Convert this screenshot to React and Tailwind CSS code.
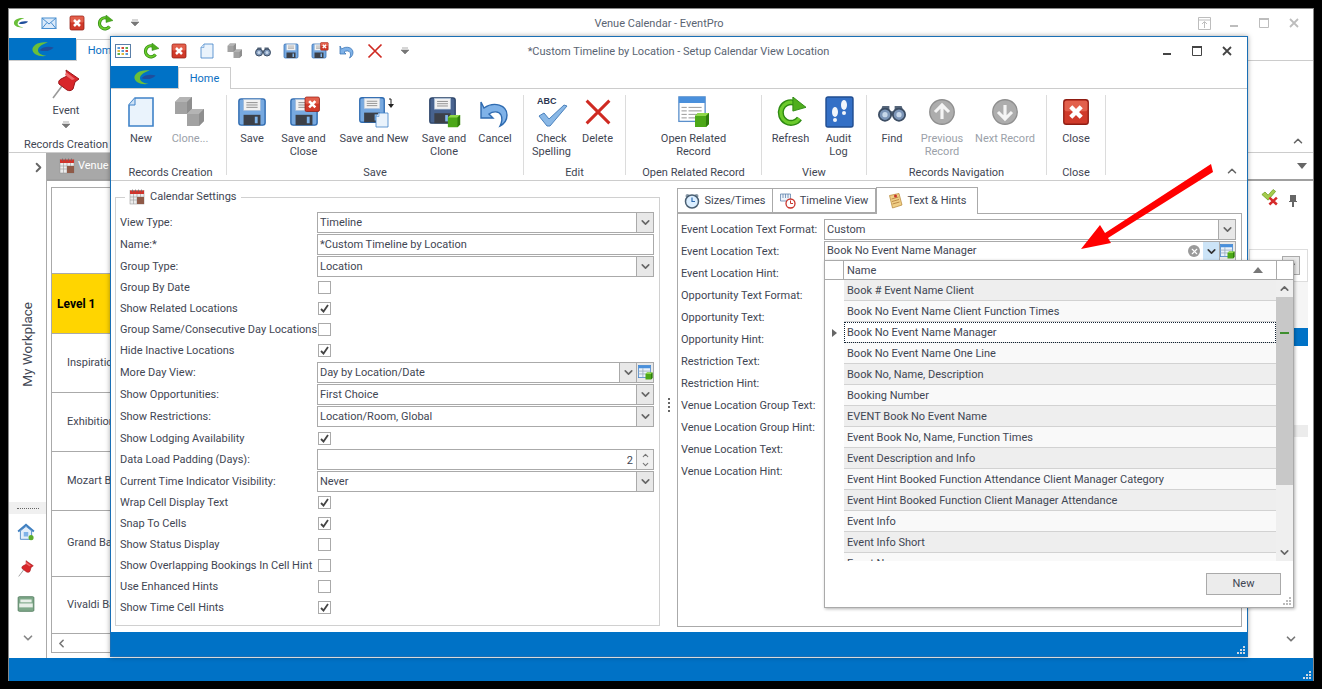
import React from 'react';
import { ChevronDown, ChevronUp, ChevronLeft, ChevronRight, X } from 'lucide-react';

const Svg = ({ s = 32, children, vb = '0 0 32 32' }) => (
  <svg width={s} height={s} viewBox={vb} className="block shrink-0">{children}</svg>
);

const Logo = ({ w = 24, h = 17 }) => (
  <svg width={w} height={h} viewBox="0 0 34 24" className="block shrink-0">
    <path d="M24 2C11 0 2 6 2 12c0 6 9 11 20 9-9-1-13-5-12-9 1-5 7-8 14-10Z" fill="#6abf3a" />
    <path d="M12 13c4-5 13-6 20-4-3 4-11 7-20 4Z" fill="#1f4e9c" />
  </svg>
);

const Mail = ({ s = 16 }) => (
  <Svg s={s}>
    <rect x="2" y="6" width="28" height="21" fill="#dbeafa" stroke="#4a8fd0" strokeWidth="2" />
    <path d="M2 6l14 12L30 6M2 27l10-12M30 27L20 15" fill="none" stroke="#4a8fd0" strokeWidth="2" />
  </Svg>
);

const RedBox = ({ s = 32 }) => (
  <Svg s={s}>
    <rect x="2" y="2" width="28" height="28" rx="3" fill="#d03a2a" stroke="#8f1c12" strokeWidth="1.5" />
    <rect x="3" y="3" width="26" height="12" rx="2" fill="#e2604c" />
    <path d="M10 10l12 12M22 10L10 22" stroke="#fff" strokeWidth="5" />
  </Svg>
);

const Refresh = ({ s = 32 }) => (
  <Svg s={s}>
    <path d="M25 23A11 11 0 1 1 19 6" fill="none" stroke="#2e8a12" strokeWidth="6.5" />
    <path d="M25 23A11 11 0 1 1 19 6" fill="none" stroke="#6ccb2c" strokeWidth="3.5" />
    <path d="M18 0l14 11-14 4Z" fill="#4fae1e" stroke="#2e8a12" strokeWidth="1" />
  </Svg>
);

const Page = ({ s = 32 }) => (
  <Svg s={s}>
    <path d="M10 2h18v28H4V9Z" fill="#eaf3fc" stroke="#3f82c8" strokeWidth="1.6" />
    <path d="M10 2v7H4" fill="#cfe2f6" stroke="#3f82c8" strokeWidth="1" />
  </Svg>
);

const Cube = ({ x, y, top = '#b4b4b4', side = '#8e8e8e', front = '#a2a2a2' }) => (
  <g transform={`translate(${x} ${y})`}>
    <path d="M0 5l5-5h12v12l-5 5H0Z" fill={front} />
    <path d="M0 5l5-5h12l-5 5Z" fill={top} />
    <path d="M12 5l5-5v12l-5 5Z" fill={side} />
  </g>
);

const Clone = ({ s = 32 }) => (
  <Svg s={s}>
    <Cube x={1} y={1} />
    <Cube x={13} y={13} />
  </Svg>
);

const Binoculars = ({ s = 32 }) => (
  <Svg s={s}>
    <path d="M5 9h8v6h6V9h8l4 11H1Z" fill="#56667a" />
    <circle cx="8" cy="19" r="7" fill="#7d96b8" stroke="#3c4d63" strokeWidth="2" />
    <circle cx="24" cy="19" r="7" fill="#7d96b8" stroke="#3c4d63" strokeWidth="2" />
    <circle cx="8" cy="19" r="3" fill="#c8d8ea" />
    <circle cx="24" cy="19" r="3" fill="#c8d8ea" />
  </Svg>
);

const Floppy = ({ s = 30, dark = false }) => (
  <Svg s={s}>
    <rect x="2" y="2" width="28" height="28" rx="2.5" fill={dark ? '#48638f' : '#77a9e0'} stroke={dark ? '#2c4468' : '#2f6bb0'} strokeWidth="1.5" />
    <rect x="7" y="2.5" width="18" height="12" fill="#f2f2f2" stroke="#9db6d4" strokeWidth="0.6" />
    <path d="M10 6h12M10 8.5h12M10 11h12" stroke="#8a8a8a" strokeWidth="1" />
    <rect x="7" y="19" width="18" height="11" fill="#3c4048" />
    <rect x="19" y="21" width="3" height="7" fill="#7fb4ea" />
  </Svg>
);

const Stack = ({ s = 32, children }) => (
  <div className="relative shrink-0" style={{ width: s, height: s }}>{children}</div>
);

const FloppyClose = ({ s = 30 }) => (
  <Stack s={s}>
    <Floppy s={s} />
    <div className="absolute right-[-2px] top-[-1px]"><RedBox s={s * 0.55} /></div>
  </Stack>
);

const FloppyNew = () => (
  <Stack s={32}>
    <Floppy s={28} />
    <div className="absolute right-[0px] bottom-[0px]"><Page s={16} /></div>
    <svg width="6" height="12" viewBox="0 0 6 12" className="absolute right-[-4px] top-[2px]">
      <path d="M1 1h2v6" fill="none" stroke="#222" strokeWidth="1" />
      <path d="M0 6h6l-3 4Z" fill="#222" />
    </svg>
  </Stack>
);

const GreenCube = ({ s = 16 }) => (
  <svg width={s} height={s} viewBox="0 0 16 16" className="block">
    <path d="M1 4l3-3h11v11l-3 3H1Z" fill="#4ca818" />
    <path d="M1 4l3-3h11l-3 3Z" fill="#8fd84a" />
    <path d="M12 4l3-3v11l-3 3Z" fill="#2f7d0c" />
  </svg>
);

const FloppyClone = () => (
  <Stack s={32}>
    <Floppy s={29} dark />
    <div className="absolute right-[-1px] bottom-[0px]"><GreenCube s={14} /></div>
  </Stack>
);

const Undo = ({ s = 32 }) => (
  <Svg s={s}>
    <path d="M5 12c10-7 23-3 23 7 0 5-3 9-7 11 2-4 3-7 1-11-2-4-8-4-12-1l4 4H2V6Z" fill="#7fb2e8" stroke="#2f6bb0" strokeWidth="1.4" />
  </Svg>
);

const RedCross = ({ s = 32 }) => (
  <Svg s={s}>
    <path d="M3 3l26 26M29 3L3 29" stroke="#cf2a22" strokeWidth="3.4" />
  </Svg>
);

const Spell = () => (
  <svg width="32" height="32" viewBox="0 0 32 32" className="block shrink-0">
    <text x="1" y="8" fontSize="9" fontWeight="700" fontFamily="Liberation Sans" fill="#2b3550">ABC</text>
    <path d="M3 20l5-3 5 6L28 9l3 1-17 20h-3Z" fill="#8ab8e6" stroke="#4c82bd" strokeWidth="1" />
  </svg>
);

const RelatedRecord = () => (
  <Stack s={32}>
    <Svg s={28}>
      <rect x="1" y="1" width="30" height="28" fill="#fff" stroke="#5a8fcb" strokeWidth="1.5" />
      <rect x="1" y="1" width="30" height="7" fill="#4a90dc" />
      <path d="M4 13h6M12 13h15M4 17h6M12 17h15M4 21h6M12 21h15M4 25h6M12 25h15" stroke="#8a8a8a" strokeWidth="1" />
    </Svg>
    <div className="absolute right-[0px] bottom-[0px]"><GreenCube s={16} /></div>
  </Stack>
);

const Audit = () => (
  <Svg>
    <rect x="3" y="1" width="27" height="30" rx="2" fill="#3470c6" stroke="#1f4c90" strokeWidth="1.4" />
    <ellipse cx="12" cy="16" rx="3" ry="5" fill="#f2f6fb" />
    <circle cx="12" cy="24" r="2" fill="#f2f6fb" />
    <ellipse cx="21" cy="9" rx="3" ry="5" fill="#f2f6fb" />
    <circle cx="21" cy="17" r="2" fill="#f2f6fb" />
  </Svg>
);

const RoundArrow = ({ down = false }) => (
  <Svg s={28}>
    <circle cx="16" cy="16" r="14" fill="#adadad" stroke="#8e8e8e" strokeWidth="1.5" />
    <path d={down ? 'M8 16l8 8 8-8M16 23V8' : 'M8 16l8-8 8 8M16 9v15'} fill="none" stroke="#f4f4f4" strokeWidth="3.6" />
  </Svg>
);

const Pin = ({ s = 32 }) => (
  <Svg s={s}>
    <path d="M3 31l9-12" stroke="#999" strokeWidth="1.6" />
    <path d="M16 3l13 9-4 3-2 7c-2 2-4 2-6 1l-8-6c-1-2 0-4 2-5l6-3Z" fill="#d8262a" stroke="#9a1418" strokeWidth="1" />
    <path d="M16 5l9 7-3 1-7-5Z" fill="#f0686a" />
  </Svg>
);

const Calendar = ({ s = 16 }) => (
  <Svg s={s}>
    <rect x="2" y="3" width="28" height="27" fill="#ececec" stroke="#8d8d8d" strokeWidth="1" />
    <rect x="2" y="3" width="28" height="7" fill="#d0342c" />
    <path d="M7 1v5M13 1v5M19 1v5M25 1v5" stroke="#666" strokeWidth="1.4" />
    <path d="M2 16h28M2 22h28M9 10v20M16 10v20M23 10v20" stroke="#9a9a9a" strokeWidth="1.2" />
    <rect x="16" y="16" width="14" height="14" fill="#8f5a48" />
  </Svg>
);

const GridIcon = () => (
  <Svg s={16}>
    <rect x="1" y="3" width="30" height="26" fill="#fff" stroke="#5a7fa8" strokeWidth="2" />
    <rect x="5" y="8" width="5" height="4" fill="#5a9ad8" />
    <rect x="13" y="8" width="5" height="4" fill="#d44b3a" />
    <rect x="21" y="8" width="5" height="4" fill="#5ab04a" />
    <rect x="5" y="14" width="5" height="4" fill="#e2b93a" />
    <rect x="13" y="14" width="5" height="4" fill="#5a9ad8" />
    <rect x="21" y="14" width="5" height="4" fill="#d44b3a" />
    <rect x="5" y="20" width="5" height="4" fill="#5ab04a" />
    <rect x="13" y="20" width="5" height="4" fill="#e2b93a" />
    <rect x="21" y="20" width="5" height="4" fill="#5a9ad8" />
  </Svg>
);

const AddGrid = ({ s = 15 }) => (
  <div className="relative" style={{ width: s, height: s }}>
    <Svg s={s - 2}>
      <rect x="1" y="1" width="30" height="30" fill="#eaf2fb" stroke="#4a86c8" strokeWidth="2" />
      <rect x="1" y="1" width="30" height="7" fill="#4a90dc" />
      <path d="M1 15h30M1 22h30M12 8v22" stroke="#9ab" strokeWidth="2" />
    </Svg>
    <div className="absolute right-[0px] bottom-[0px]"><GreenCube s={8} /></div>
  </div>
);

const Clock = () => (
  <Svg s={16}>
    <circle cx="7" cy="6" r="4" fill="#8a9aa8" />
    <circle cx="25" cy="6" r="4" fill="#8a9aa8" />
    <circle cx="16" cy="17" r="13" fill="#dbeeff" stroke="#4a5f72" strokeWidth="3" />
    <path d="M16 9v8h6" fill="none" stroke="#2f6bb0" strokeWidth="2.4" />
  </Svg>
);

const TimelineIcon = () => (
  <Svg s={16}>
    <path d="M1 2h20v14H1Z" fill="#eef3fa" stroke="#5a7fa8" strokeWidth="1.5" />
    <path d="M6 2v8M11 2v8M16 2v8" stroke="#5a7fa8" strokeWidth="1.5" />
    <circle cx="21" cy="21" r="9" fill="#fff" stroke="#c9342c" strokeWidth="2.6" />
    <path d="M21 15v6h5" fill="none" stroke="#c9342c" strokeWidth="2" />
  </Svg>
);

const NoteIcon = () => (
  <Svg s={16}>
    <path d="M5 5l19-4 6 23-19 6Z" fill="#f0cf86" stroke="#b88a3c" strokeWidth="1.5" />
    <path d="M9 12l14-4M10 17l14-4M11 22l14-4" stroke="#b0793a" strokeWidth="1.6" />
    <circle cx="17" cy="6" r="3" fill="#c9342c" />
  </Svg>
);

const HomeIcon = () => (
  <Svg s={18}>
    <path d="M2 15L16 3l14 12" fill="none" stroke="#3f7fc0" strokeWidth="3.4" />
    <path d="M6 14v15h20V14L16 6Z" fill="#e3eefa" stroke="#3f7fc0" strokeWidth="1.5" />
    <rect x="12" y="16" width="8" height="8" fill="#7fb2e8" />
    <circle cx="25" cy="26" r="4.5" fill="#5cad2b" />
  </Svg>
);

const BedIcon = () => (
  <Svg s={18}>
    <rect x="2" y="3" width="28" height="26" rx="2" fill="#7fa98a" stroke="#4f7a5c" strokeWidth="1.5" />
    <rect x="6" y="8" width="20" height="5" fill="#e8efe8" />
    <rect x="4" y="15" width="24" height="7" fill="#e8efe8" />
  </Svg>
);

const CheckX = () => (
  <Svg s={20}>
    <path d="M3 12l5-4 5 5 8-9 4 3-12 14Z" fill="#a4cc4c" stroke="#6e9a24" strokeWidth="1.2" />
    <path d="M15 17l12 11M27 17L15 28" stroke="#d62c2c" strokeWidth="4" />
  </Svg>
);

const TinyPin = () => (
  <svg width="10" height="13" viewBox="0 0 10 13" className="block">
    <path d="M2 1h6v6h1v1H1V7h1ZM4 8h2v5H4Z" fill="#666" />
  </svg>
);

const Grip = ({ color = '#cfd8e3' }) => (
  <svg width="9" height="9" viewBox="0 0 9 9" className="block">
    <path d="M6 0h2v2H6ZM3 3h2v2H3ZM6 3h2v2H6ZM0 6h2v2H0ZM3 6h2v2H3ZM6 6h2v2H6Z" fill={color} />
  </svg>
);

const SmallCaret = () => (
  <svg width="8" height="8" viewBox="0 0 8 8" className="block">
    <path d="M1 1h6M0 3h8l-4 4Z" fill="#777" stroke="#777" strokeWidth="0.6" />
  </svg>
);

const WinButtons = ({ color = '#444' }) => (
  <div className="flex items-center">
    <div className="flex w-[30px] justify-center">
      <svg width="10" height="10" viewBox="0 0 10 10"><path d="M1 7h8v2H1Z" fill={color} /></svg>
    </div>
    <div className="flex w-[30px] justify-center">
      <svg width="10" height="10" viewBox="0 0 10 10"><path d="M.5 1.5h9v8h-9Z" fill="none" stroke={color} /><path d="M0 0h10v2H0Z" fill={color} /></svg>
    </div>
    <div className="flex w-[30px] justify-center">
      <svg width="10" height="10" viewBox="0 0 10 10"><path d="M1 1l8 8M9 1l-8 8" stroke={color} strokeWidth="1.8" /></svg>
    </div>
  </div>
);

const RibbonButton = ({ w, label, icon, disabled }) => (
  <div className={`flex flex-col items-center pt-[1px] ${w}`}>
    <div className="flex h-[32px] items-center justify-center">{icon}</div>
    <div className={`mt-[4px] text-center leading-[13px] ${disabled ? 'text-[#9ba1a9]' : ''}`}>{label}</div>
  </div>
);

const RibbonGroup = ({ w, label, children }) => (
  <div className={`flex h-[80px] flex-col border-r border-[#dcdcdc] ${w}`}>
    <div className="flex flex-1">{children}</div>
    <div className="h-[16px] pt-[6px] text-center leading-[16px]">{label}</div>
  </div>
);

const Chevron = () => (
  <div className="flex h-full w-[17px] items-center justify-center border-l border-[#aaa] bg-[#e8e8e8]">
    <ChevronDown size={13} strokeWidth={3} className="text-[#666]" />
  </div>
);

const TextBox = ({ children, right }) => (
  <div className="flex h-[21px] w-[337px] items-center border border-[#aaa] bg-white">
    <span className="flex-1 pl-[2px] pt-[1px] leading-none">{children}</span>
    {right}
  </div>
);

const Tick = ({ on }) => (
  <div className="ml-[1px] flex h-[13px] w-[13px] items-center justify-center border border-[#aaa] bg-white">
    {on && (
      <svg width="11" height="11" viewBox="0 0 11 11">
        <path d="M2 6l2.5 2.5L9 2" fill="none" stroke="#444" strokeWidth="1.8" />
      </svg>
    )}
  </div>
);

const settings = [
  { label: 'View Type:', kind: 'select', value: 'Timeline' },
  { label: 'Name:*', kind: 'text', value: '*Custom Timeline by Location' },
  { label: 'Group Type:', kind: 'select', value: 'Location' },
  { label: 'Group By Date', kind: 'check', on: false },
  { label: 'Show Related Locations', kind: 'check', on: true },
  { label: 'Group Same/Consecutive Day Locations', kind: 'check', on: false },
  { label: 'Hide Inactive Locations', kind: 'check', on: true },
  { label: 'More Day View:', kind: 'add', value: 'Day by Location/Date' },
  { label: 'Show Opportunities:', kind: 'select', value: 'First Choice' },
  { label: 'Show Restrictions:', kind: 'select', value: 'Location/Room, Global' },
  { label: 'Show Lodging Availability', kind: 'check', on: true, tall: true },
  { label: 'Data Load Padding (Days):', kind: 'number', value: '2' },
  { label: 'Current Time Indicator Visibility:', kind: 'select', value: 'Never', tall: true },
  { label: 'Wrap Cell Display Text', kind: 'check', on: true },
  { label: 'Snap To Cells', kind: 'check', on: true },
  { label: 'Show Status Display', kind: 'check', on: false },
  { label: 'Show Overlapping Bookings In Cell Hint', kind: 'check', on: false },
  { label: 'Use Enhanced Hints', kind: 'check', on: false },
  { label: 'Show Time Cell Hints', kind: 'check', on: true },
];

const hintLabels = [
  'Event Location Text Format:', 'Event Location Text:', 'Event Location Hint:', 'Opportunity Text Format:',
  'Opportunity Text:', 'Opportunity Hint:', 'Restriction Text:', 'Restriction Hint:',
  'Venue Location Group Text:', 'Venue Location Group Hint:', 'Venue Location Text:', 'Venue Location Hint:',
];

const names = [
  'Book # Event Name Client', 'Book No Event Name Client Function Times', 'Book No Event Name Manager',
  'Book No Event Name One Line', 'Book No, Name, Description', 'Booking Number', 'EVENT Book No Event Name',
  'Event Book No, Name, Function Times', 'Event Description and Info',
  'Event Hint Booked Function Attendance Client Manager Category',
  'Event Hint Booked Function Client Manager Attendance', 'Event Info', 'Event Info Short', 'Event Name',
];

const locations = [
  { name: '', h: 'h-[86px]' },
  { name: 'Level 1', h: 'h-[60px]', head: true },
  { name: 'Inspiration', h: 'h-[59px]' },
  { name: 'Exhibition', h: 'h-[59px]' },
  { name: 'Mozart Ballroom', h: 'h-[59px]' },
  { name: 'Grand Ballroom', h: 'h-[66px]' },
  { name: 'Vivaldi Ballroom', h: 'h-[57px]' },
];

const SettingRow = ({ row }) => {
  let control;
  if (row.kind === 'check') control = <Tick on={row.on} />;
  if (row.kind === 'select') control = <TextBox right={<Chevron />}>{row.value}</TextBox>;
  if (row.kind === 'text') control = <TextBox>{row.value}</TextBox>;
  if (row.kind === 'add') {
    control = (
      <TextBox right={<><Chevron /><div className="flex h-full w-[17px] items-center justify-center border-l border-[#aaa] bg-[#e8e8e8]"><AddGrid /></div></>}>
        {row.value}
      </TextBox>
    );
  }
  if (row.kind === 'number') {
    control = (
      <TextBox right={
        <div className="flex h-full w-[17px] flex-col items-center justify-center border-l border-[#aaa] bg-[#f0f0f0] text-[#777]">
          <ChevronUp size={9} strokeWidth={3} />
          <ChevronDown size={9} strokeWidth={3} />
        </div>
      }>
        <span className="block pr-[3px] text-right">{row.value}</span>
      </TextBox>
    );
  }
  return (
    <div className={`flex items-center ${row.tall || ['select', 'text', 'add'].includes(row.kind) ? 'h-[22px]' : 'h-[21px]'}`}>
      <div className="w-[197px] whitespace-nowrap pt-[2px]">{row.label}</div>
      {control}
    </div>
  );
};

const NamePopup = () => (
  <div className="absolute left-[824px] top-[260px] flex h-[348px] w-[470px] flex-col border border-[#aaa] bg-white shadow-[1px_1px_3px_rgba(0,0,0,0.3)]">
    <div className="flex h-[19px] shrink-0 border-b border-[#aaa]">
      <div className="w-[19px] border-r border-[#aaa]" />
      <div className="flex-1 pl-[3px] leading-[20px]">Name</div>
      <div className="flex w-[32px] items-center justify-start pl-[9px]">
        <svg width="10" height="6" viewBox="0 0 10 6"><path d="M0 6l5-6 5 6Z" fill="#777" /></svg>
      </div>
      <div className="w-[17px] border-l border-[#aaa]" />
    </div>
    <div className="flex h-[281px] overflow-hidden">
      <div className="w-[19px] shrink-0">
        <div className="flex h-[42px]" />
        <div className="flex h-[21px] items-center justify-center">
          <svg width="5" height="8" viewBox="0 0 5 8"><path d="M0 0l5 4-5 4Z" fill="#666" /></svg>
        </div>
      </div>
      <div className="flex-1">
        {names.map((name, i) => (
          <div key={name} className={`h-[21px] whitespace-nowrap border-b border-[#d2d2d2] pl-[3px] leading-[22px] ${i === 2 ? 'bg-white outline-1 -outline-offset-1 outline-dotted outline-[#123]' : i % 2 ? 'bg-[#f9f9f9]' : 'bg-[#eeeeee]'}`}>
            {name}
          </div>
        ))}
      </div>
      <div className="flex w-[17px] shrink-0 flex-col bg-[#efefef]">
        <div className="flex h-[17px] items-center justify-center">
          <ChevronUp size={13} strokeWidth={3} className="text-[#666]" />
        </div>
        <div className="flex h-[188px] flex-col items-center bg-[#c8c8c8] pt-[35px]">
          <div className="h-[2px] w-[9px] bg-[#3f8f2f]" />
        </div>
        <div className="mt-auto flex h-[17px] items-center justify-center">
          <ChevronDown size={13} strokeWidth={3} className="text-[#666]" />
        </div>
      </div>
    </div>
    <div className="relative flex flex-1 items-start justify-end pr-[12px] pt-[12px]">
      <div className="flex h-[22px] w-[75px] items-center justify-center border border-[#aaa] bg-[#ececec] pt-[1px]">New</div>
      <div className="absolute bottom-[1px] right-[1px]"><Grip color="#bbb" /></div>
    </div>
  </div>
);

const Modal = () => (
  <div className="absolute left-[110px] top-[36px] flex h-[621px] w-[1138px] flex-col border border-[#1a6fb5] bg-white shadow-[0_0_5px_rgba(0,0,0,0.35)]">
    <div className="flex h-[30px] shrink-0 items-center pb-[2px] pl-[4px]">
      <div className="flex items-center gap-[12px]">
        <GridIcon />
        <Refresh s={16} />
        <RedBox s={16} />
        <Page s={16} />
        <Clone s={16} />
        <Binoculars s={16} />
        <Floppy s={16} />
        <FloppyClose s={16} />
        <Undo s={16} />
        <RedCross s={16} />
        <div className="pl-[6px]"><SmallCaret /></div>
      </div>
      <div className="flex-1 pr-[204px] pt-[2px] text-center text-[#5a6472]">*Custom Timeline by Location - Setup Calendar View Location</div>
      <div className="pr-[5px]"><WinButtons /></div>
    </div>
    <div className="flex h-[22px] shrink-0 items-end border-b border-[#ccc]">
      <div className="flex h-[22px] w-[67px] items-center justify-center bg-[#0072c6]"><Logo /></div>
      <div className="-mb-[1px] h-[22px] w-[53px] border border-b-0 border-[#ccc] bg-white text-center leading-[21px] text-[#0b6fc2]">Home</div>
    </div>
    <div className="flex h-[92px] shrink-0 border-b border-[#ccc] pl-[4px] pt-[6px]">
      <RibbonGroup w="w-[112px]" label="Records Creation">
        <RibbonButton w="w-[52px]" label="New" icon={<Page />} />
        <RibbonButton w="w-[46px]" label="Clone..." icon={<Clone />} disabled />
      </RibbonGroup>
      <RibbonGroup w="w-[297px]" label="Save">
        <RibbonButton w="w-[50px]" label="Save" icon={<Floppy />} />
        <RibbonButton w="w-[53px]" label={<>Save and<br />Close</>} icon={<FloppyClose />} />
        <RibbonButton w="w-[88px]" label="Save and New" icon={<FloppyNew />} />
        <RibbonButton w="w-[52px]" label={<>Save and<br />Clone</>} icon={<FloppyClone />} />
        <RibbonButton w="w-[50px]" label="Cancel" icon={<Undo />} />
      </RibbonGroup>
      <RibbonGroup w="w-[102px]" label="Edit">
        <RibbonButton w="w-[55px]" label={<>Check<br />Spelling</>} icon={<Spell />} />
        <RibbonButton w="w-[37px]" label="Delete" icon={<RedCross s={28} />} />
      </RibbonGroup>
      <RibbonGroup w="w-[136px]" label="Open Related Record">
        <RibbonButton w="w-[136px]" label={<>Open Related<br />Record</>} icon={<RelatedRecord />} />
      </RibbonGroup>
      <RibbonGroup w="w-[105px]" label="View">
        <RibbonButton w="w-[57px]" label="Refresh" icon={<Refresh s={30} />} />
        <RibbonButton w="w-[39px]" label={<>Audit<br />Log</>} icon={<Audit />} />
      </RibbonGroup>
      <RibbonGroup w="w-[180px]" label="Records Navigation">
        <RibbonButton w="w-[50px]" label="Find" icon={<Binoculars s={28} />} />
        <RibbonButton w="w-[50px]" label={<>Previous<br />Record</>} icon={<RoundArrow />} disabled />
        <RibbonButton w="w-[76px]" label="Next Record" icon={<RoundArrow down />} disabled />
      </RibbonGroup>
      <RibbonGroup w="w-[59px]" label="Close">
        <RibbonButton w="w-[59px]" label="Close" icon={<RedBox s={28} />} />
      </RibbonGroup>
      <div className="flex flex-1 items-end justify-end pb-[2px] pr-[8px]">
        <ChevronUp size={14} strokeWidth={2.6} className="text-[#666]" />
      </div>
    </div>
    <div className="flex min-h-0 flex-1 pl-[4px]">
      <fieldset className="mt-[8px] h-[437px] w-[545px] border border-[#d0d0d0] px-[4px] pb-0">
        <legend className="ml-[5px] flex h-[16px] items-center gap-[5px] px-[4px]">
          <Calendar />
          <span className="pt-[1px]">Calendar Settings</span>
        </legend>
        <div className="pt-[6px]">
          {settings.map((row) => <SettingRow key={row.label} row={row} />)}
        </div>
      </fieldset>
      <div className="flex w-[17px] flex-col items-center justify-center gap-[2px] pb-[4px]">
        <div className="h-[2px] w-[2px] bg-[#666]" />
        <div className="h-[2px] w-[2px] bg-[#666]" />
        <div className="h-[2px] w-[2px] bg-[#666]" />
        <div className="h-[2px] w-[2px] bg-[#666]" />
      </div>
      <div className="flex w-[565px] flex-col pt-[6px]">
        <div className="relative z-10 flex h-[26px] shrink-0 items-end">
          <div className="flex h-[25px] w-[96px] items-center justify-center gap-[4px] border border-[#aaa] pt-[1px]"><Clock />Sizes/Times</div>
          <div className="flex h-[25px] w-[103px] items-center justify-center gap-[4px] border border-l-0 border-[#aaa] pt-[1px]"><TimelineIcon />Timeline View</div>
          <div className="-mb-[1px] flex h-[27px] w-[102px] items-center justify-center gap-[4px] border border-b-0 border-[#aaa] bg-white"><NoteIcon />Text &amp; Hints</div>
        </div>
        <div className="mb-[5px] flex flex-1 border border-[#aaa] pl-[3px] pt-[5px]">
          <div className="w-[143px] shrink-0">
            {hintLabels.map((label) => <div key={label} className="h-[22px] whitespace-nowrap leading-[22px]">{label}</div>)}
          </div>
          <div className="flex w-[412px] flex-col gap-[1px]">
            <div className="flex h-[21px] items-center border border-[#aaa]">
              <span className="flex-1 pl-[2px] pt-[1px]">Custom</span>
              <Chevron />
            </div>
            <div className="flex h-[20px] items-center border border-[#aaa]">
              <span className="flex-1 pl-[2px] pt-[1px]">Book No Event Name Manager</span>
              <div className="mr-[3px] flex h-[12px] w-[12px] items-center justify-center rounded-full bg-[#9a9a9a]">
                <X size={9} strokeWidth={3} className="text-white" />
              </div>
              <div className="flex h-full w-[16px] items-center justify-center bg-[#cce4f7]">
                <ChevronDown size={13} strokeWidth={3} className="text-[#333]" />
              </div>
              <div className="flex h-full w-[16px] items-center justify-center border-l border-[#aaa] bg-[#e8e8e8]"><AddGrid /></div>
            </div>
          </div>
        </div>
      </div>
    </div>
    <div className="flex h-[24px] shrink-0 items-end justify-end bg-[#0072c6] p-[1px]"><Grip /></div>
  </div>
);

const MainWindow = () => (
  <div className="flex h-full flex-col border border-b-0 border-[#888] bg-white">
    <div className="flex h-[30px] shrink-0 items-center pb-[2px] pl-[4px]">
      <div className="flex items-center gap-[12px]">
        <Logo w={16} h={12} />
        <Mail />
        <RedBox s={16} />
        <Refresh s={16} />
        <div className="pl-[6px]"><SmallCaret /></div>
      </div>
      <div className="flex-1 pr-[10px] pt-[2px] text-center text-[#5a6472]">Venue Calendar - EventPro</div>
      <div className="flex items-center pr-[4px]">
        <div className="flex w-[30px] justify-center">
          <svg width="13" height="13" viewBox="0 0 13 13">
            <path d="M.5 .5h12v12H.5ZM1 3h11M6.500 11V5M4 7l2.500-2.500L9 7" fill="none" stroke="#bdbdbd" />
          </svg>
        </div>
        <WinButtons color="#bdbdbd" />
      </div>
    </div>
    <div className="flex h-[22px] shrink-0 items-end border-b border-[#ccc]">
      <div className="flex h-[22px] w-[67px] items-center justify-center bg-[#0072c6]"><Logo /></div>
      <div className="-mb-[1px] h-[22px] w-[53px] border border-b-0 border-[#ccc] bg-white text-center leading-[21px] text-[#0b6fc2]">Home</div>
    </div>
    <div className="flex h-[92px] shrink-0 border-b border-[#ccc]">
      <div className="flex w-[114px] flex-col items-center pt-[6px]">
        <Pin />
        <div className="mt-[4px] leading-[16px]">Event</div>
        <div className="mt-[2px]"><SmallCaret /></div>
        <div className="mt-[9px] whitespace-nowrap leading-[14px]">Records Creation</div>
      </div>
      <div className="flex flex-1 items-end justify-end pb-[4px] pr-[8px]">
        <ChevronUp size={14} strokeWidth={2.6} className="text-[#666]" />
      </div>
    </div>
    <div className="flex min-h-0 flex-1">
      <div className="flex w-[38px] shrink-0 flex-col items-center border-r border-[#aaa]">
        <div className="flex h-[28px] w-full items-center justify-end"><ChevronRight size={15} strokeWidth={3} className="text-[#666]" /></div>
        <div className="flex h-[321px] items-center pt-[6px]">
          <span className="rotate-180 text-[13.5px] [writing-mode:vertical-rl]">My Workplace</span>
        </div>
        <div className="flex h-[12px] w-full items-center justify-center gap-[2px] bg-[#f0f0f0]">
          <div className="h-[1px] w-[22px] border-t border-dotted border-[#666]" />
        </div>
        <div className="mt-[9px] flex flex-col items-center gap-[18px] pr-[4px]">
          <HomeIcon />
          <Pin s={18} />
          <BedIcon />
        </div>
        <ChevronDown size={14} strokeWidth={3} className="mt-[18px] text-[#888]" />
      </div>
      <div className="flex min-w-0 flex-1 flex-col">
        <div className="flex h-[28px] shrink-0 items-center justify-end border-b-2 border-[#a0a0a0] pr-[6px]">
          <div className="mr-auto flex h-full w-[200px] items-center gap-[3px] bg-[#a8a8a8] pl-[12px] text-white"><Calendar />Venue Calendar</div>
          <svg width="10" height="6" viewBox="0 0 10 6"><path d="M0 0h10L5 6Z" fill="#666" /></svg>
        </div>
        <div className="flex min-h-0 flex-1">
          <div className="ml-[4px] mt-[6px] flex h-[466px] flex-1 flex-col border border-[#aaa]">
            {locations.map((loc) => (
              <div key={loc.name} className={`flex shrink-0 items-center border-b border-[#aaa] ${loc.h} ${loc.head ? 'bg-[#ffd500] pl-[5px] text-[12px] font-bold text-black' : 'pl-[15px]'}`}>
                {loc.name}
              </div>
            ))}
            <div className="flex h-[20px] items-center pl-[3px]"><ChevronLeft size={13} strokeWidth={3} className="text-[#777]" /></div>
          </div>
          <div className="flex w-[66px] shrink-0 flex-col pl-[2px] pr-[5px]">
            <div className="flex h-[26px] items-end justify-end gap-[8px] pr-[10px]">
              <CheckX />
              <TinyPin />
            </div>
            <div className="mt-[42px] flex h-[33px] items-center justify-end border border-[#ddd] pr-[7px]">
              <div className="flex h-[19px] w-[18px] items-center justify-center border border-[#aaa] bg-[#e8e8e8]">
                <ChevronDown size={11} strokeWidth={3} className="text-[#666]" />
              </div>
            </div>
            <div className="flex h-[46px] justify-end bg-[#f5f5f5] pr-[14px] pt-[14px]">
              <div className="h-[19px] w-[2px] bg-[#ccc]" />
            </div>
            <div className="h-[18px] bg-[#0072c6]" />
            <div className="mt-[79px] h-[12px] bg-[#ececec]" />
            <div className="mt-auto flex justify-end pb-[12px] pr-[10px]">
              <ChevronDown size={14} strokeWidth={3} className="text-[#777]" />
            </div>
          </div>
        </div>
      </div>
    </div>
    <div className="flex h-[23px] shrink-0 items-end justify-end bg-[#0072c6] p-[1px]"><Grip /></div>
  </div>
);

export default function App() {
  return (
    <div className="relative h-[689px] w-[1322px] overflow-hidden bg-black p-[8px] font-['Roboto',sans-serif] text-[11px] text-[#3f4653]">
      <MainWindow />
      <Modal />
      <NamePopup />
      <svg width="1322" height="689" className="pointer-events-none absolute left-0 top-0">
        <polygon points="1081,249 1100,225 1105,233 1211,164 1213,172 1108,238 1111,243" fill="#ff0000" />
      </svg>
    </div>
  );
}
